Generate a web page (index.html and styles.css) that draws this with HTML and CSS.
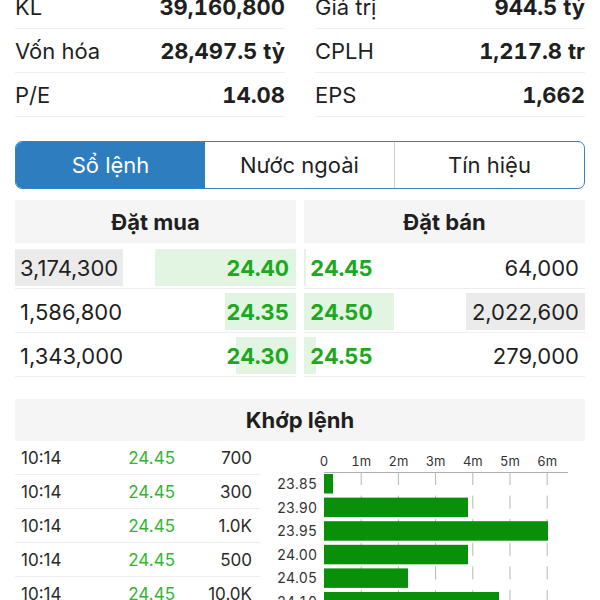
FILE: index.html
```html
<!DOCTYPE html>
<html lang="vi">
<head>
    <meta charset="UTF-8">
    <meta name="viewport" content="width=device-width, initial-scale=1.0">
    <title>Chi tiết cổ phiếu</title>
    <link rel="stylesheet" href="styles.css">
</head>
<body>
    <div class="page">
        <!-- Chỉ số cơ bản -->
        <div class="stats">
            <div class="stat"><span>KL</span><b>39,160,800</b></div>
            <div class="stat"><span>Giá trị</span><b>944.5 tỷ</b></div>
            <div class="stat"><span>Vốn hóa</span><b>28,497.5 tỷ</b></div>
            <div class="stat"><span>CPLH</span><b>1,217.8 tr</b></div>
            <div class="stat"><span>P/E</span><b>14.08</b></div>
            <div class="stat"><span>EPS</span><b>1,662</b></div>
        </div>

        <div class="tabs">
            <div class="tab active">Sổ lệnh</div>
            <div class="tab">Nước ngoài</div>
            <div class="tab">Tín hiệu</div>
        </div>

        <!-- Sổ lệnh -->
        <div class="book">
            <div class="side bid">
                <div class="side-head">Đặt mua</div>
                <div class="level">
                    <span class="vol max">3,174,300</span>
                    <span class="price" style="background-size: 141px 100%">24.40</span>
                </div>
                <div class="level">
                    <span class="vol">1,586,800</span>
                    <span class="price" style="background-size: 71px 100%">24.35</span>
                </div>
                <div class="level">
                    <span class="vol">1,343,000</span>
                    <span class="price" style="background-size: 60px 100%">24.30</span>
                </div>
            </div>
            <div class="side ask">
                <div class="side-head">Đặt bán</div>
                <div class="level">
                    <span class="price" style="background-size: 2px 100%">24.45</span>
                    <span class="vol">64,000</span>
                </div>
                <div class="level">
                    <span class="price" style="background-size: 90px 100%">24.50</span>
                    <span class="vol max">2,022,600</span>
                </div>
                <div class="level">
                    <span class="price" style="background-size: 12px 100%">24.55</span>
                    <span class="vol">279,000</span>
                </div>
            </div>
        </div>

        <!-- Khớp lệnh -->
        <div class="match-head">Khớp lệnh</div>
        <div class="match-body">
            <div class="trades">
                <div class="trade"><span>10:14</span><span class="p">24.45</span><span class="v">700</span></div>
                <div class="trade"><span>10:14</span><span class="p">24.45</span><span class="v">300</span></div>
                <div class="trade"><span>10:14</span><span class="p">24.45</span><span class="v">1.0K</span></div>
                <div class="trade"><span>10:14</span><span class="p">24.45</span><span class="v">500</span></div>
                <div class="trade"><span>10:14</span><span class="p">24.45</span><span class="v">10.0K</span></div>
            </div>

            <svg class="chart" width="315" height="170" viewBox="0 0 315 170">
                <g class="axis-labels">
                    <text x="54" y="25">0</text>
                    <text x="91.2" y="25">1m</text>
                    <text x="128.4" y="25">2m</text>
                    <text x="165.6" y="25">3m</text>
                    <text x="202.8" y="25">4m</text>
                    <text x="240" y="25">5m</text>
                    <text x="277.2" y="25">6m</text>
                </g>
                <g class="grid">
                    <line x1="91.2" y1="31" x2="91.2" y2="170"/>
                    <line x1="128.4" y1="31" x2="128.4" y2="170"/>
                    <line x1="165.6" y1="31" x2="165.6" y2="170"/>
                    <line x1="202.8" y1="31" x2="202.8" y2="170"/>
                    <line x1="240" y1="31" x2="240" y2="170"/>
                    <line x1="277.2" y1="31" x2="277.2" y2="170"/>
                </g>
                <line class="axis" x1="54" y1="31.5" x2="298" y2="31.5"/>
                <g class="bars">
                    <rect x="54" y="33" width="9" height="19.5"/>
                    <rect x="54" y="56.6" width="144" height="19.5"/>
                    <rect x="54" y="80.2" width="224" height="19.5"/>
                    <rect x="54" y="103.8" width="144" height="19.5"/>
                    <rect x="54" y="127.4" width="84" height="19.5"/>
                    <rect x="54" y="151" width="175" height="19.5"/>
                </g>
                <g class="price-labels">
                    <text x="47" y="48">23.85</text>
                    <text x="47" y="71.6">23.90</text>
                    <text x="47" y="95.2">23.95</text>
                    <text x="47" y="118.8">24.00</text>
                    <text x="47" y="142.4">24.05</text>
                    <text x="47" y="166">24.10</text>
                </g>
            </svg>
        </div>
    </div>
</body>
</html>
```

FILE: styles.css
```css
body {
    margin: 0;
    font-family: Inter, "Noto Sans", sans-serif;
    color: #1f1f1f;
    background: #fff;
}

.page {
    padding: 0 15px;
    margin-top: -15px;
}

/* Chỉ số */
.stats {
    display: grid;
    grid-template-columns: 1fr 1fr;
    column-gap: 30px;
}

.stat {
    display: flex;
    justify-content: space-between;
    align-items: center;
    height: 44px;
    box-sizing: border-box;
    border-bottom: 1px solid #eeeeee;
    font-size: 22px;
}

.stat b {
    font-weight: 700;
    font-variant-numeric: tabular-nums;
}

/* Onglets */
.tabs {
    margin-top: 24px;
    display: flex;
    height: 48px;
    box-sizing: border-box;
    border: 1.5px solid #3a82bf;
    border-radius: 7px;
    overflow: hidden;
}

.tab {
    flex: 1;
    display: flex;
    align-items: center;
    justify-content: center;
    font-size: 22px;
}

.tab + .tab {
    border-left: 1px solid #d0d0d0;
}

.tab.active {
    background: #2d7dbf;
    color: #fff;
    border-left: none;
}

.tab.active + .tab {
    border-left: none;
}

/* Sổ lệnh */
.book {
    margin-top: 11px;
    display: grid;
    grid-template-columns: 1fr 1fr;
    column-gap: 8px;
}

.side-head {
    height: 43px;
    margin-bottom: 2px;
    background: #f5f5f5;
    display: flex;
    align-items: center;
    justify-content: center;
    font-size: 22px;
    font-weight: 700;
}

.level {
    display: flex;
    align-items: stretch;
    justify-content: space-between;
    height: 44px;
    box-sizing: border-box;
    padding: 4px 0 2px;
    border-bottom: 1px solid #eeeeee;
}

.vol {
    display: flex;
    align-items: center;
    padding: 0 5px;
    font-size: 22px;
}

.ask .vol {
    padding: 0 6px;
}

.vol.max {
    background: #ebebeb;
}

.price {
    flex: 1;
    display: flex;
    align-items: center;
    justify-content: flex-end;
    padding-right: 7px;
    font-size: 22px;
    font-weight: 700;
    font-variant-numeric: tabular-nums;
    color: #1da91d;
    background-image: linear-gradient(#e2f5e2, #e2f5e2);
    background-repeat: no-repeat;
    background-position: right center;
}

.ask .price {
    justify-content: flex-start;
    padding-right: 0;
    padding-left: 6px;
    background-position: left center;
}

/* Khớp lệnh */
.match-head {
    margin-top: 22px;
    height: 42px;
    background: #f5f5f5;
    display: flex;
    align-items: center;
    justify-content: center;
    font-size: 22px;
    font-weight: 700;
}

.match-body {
    display: grid;
    grid-template-columns: 245px 1fr;
    column-gap: 10px;
}

.trade {
    display: grid;
    grid-template-columns: 1fr 60px 77px;
    align-items: center;
    height: 34px;
    box-sizing: border-box;
    padding: 0 8px 0 6px;
    border-bottom: 1px solid #eeeeee;
    font-size: 17px;
    color: #2a2a2a;
}

.trade .p {
    color: #33b533;
    text-align: right;
}

.trade .v {
    text-align: right;
}

.chart {
    display: block;
    font-family: Inter, "Noto Sans", sans-serif;
    font-variant-numeric: tabular-nums;
}

.chart .axis-labels text {
    font-size: 13px;
    fill: #333;
    text-anchor: middle;
}

.chart .price-labels text {
    font-size: 14px;
    fill: #333;
    text-anchor: end;
}

.chart .grid line {
    stroke: #b5b5b5;
    stroke-width: 1;
    stroke-dasharray: 13 10.6;
}

.chart .axis {
    stroke: #b0b0b0;
    stroke-width: 1;
}

.chart .bars rect {
    fill: #0a8f0a;
}
```
